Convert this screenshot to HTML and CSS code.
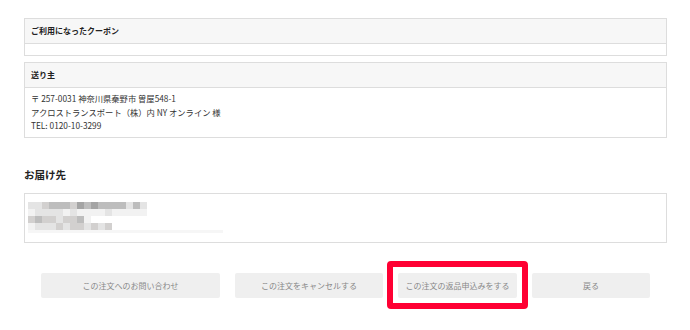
FILE: index.html
```html
<!DOCTYPE html>
<html lang="ja">
<head>
    <meta charset="UTF-8">
    <meta name="viewport" content="width=device-width, initial-scale=1.0">
    <title>注文詳細</title>
    <link rel="stylesheet" href="styles.css">
</head>
<body>

<div class="page">

    <div class="card">
        <div class="card-head">ご利用になったクーポン</div>
        <div class="card-body empty"></div>
    </div>

    <div class="card">
        <div class="card-head">送り主</div>
        <div class="card-body">
            <p>〒 257-0031 神奈川県秦野市 曽屋548-1</p>
            <p>アクロストランスポート（株）内 NY オンライン 様</p>
            <p>TEL: 0120-10-3299</p>
        </div>
    </div>

    <h2 class="title">お届け先</h2>

    <div class="card delivery">
        <!-- address is masked -->
        <div class="mask">
            <div class="row"><span class="s4"></span><span class="s4"></span><span class="s3"></span><span class="s2"></span><span class="s2"></span><span class="s2"></span><span class="s3"></span><span class="s1"></span><span class="s2"></span><span class="s1"></span><span class="s2"></span><span class="s2"></span><span class="s2"></span><span class="s2"></span><span class="s4"></span><span class="s2"></span><span class="s4"></span></div>
            <div class="row"><span class="s5"></span><span class="s4"></span><span class="s4"></span><span class="s4"></span><span class="s4"></span><span class="s5"></span><span class="s4"></span><span class="s5"></span><span class="s5"></span><span class="s5"></span><span class="s5"></span><span class="s4"></span><span class="s5"></span><span class="s5"></span><span class="s5"></span><span class="s5"></span><span class="s5"></span></div>
            <div class="row"><span class="s3"></span><span class="s2"></span><span class="s3"></span><span class="s3"></span><span class="s4"></span><span class="s3"></span><span class="s3"></span><span class="s2"></span><span class="s5"></span></div>
            <div class="row"><span class="s5"></span><span class="s4"></span><span class="s4"></span><span class="s4"></span><span class="s3"></span><span class="s4"></span><span class="s3"></span><span class="s3"></span><span class="s4"></span><span class="s3"></span><span class="s4"></span><span class="s3"></span></div>
            <div class="row thin"></div>
        </div>
    </div>

    <div class="actions">
        <button class="btn w1" type="button">この注文へのお問い合わせ</button>
        <button class="btn w2" type="button">この注文をキャンセルする</button>
        <div class="marked">
            <button class="btn w3" type="button">この注文の返品申込みをする</button>
            <span class="frame"></span>
        </div>
        <button class="btn w4" type="button">戻る</button>
    </div>

</div>

</body>
</html>
```

FILE: styles.css
```css
body {
    margin: 0;
    min-height: 330px;
    background-color: #fff;
    font-family: "Noto Sans CJK JP", "Liberation Sans", sans-serif;
    color: #333;
}

.page {
    width: 643px;
    padding: 18px 0 31px 24px;
}

.card {
    border: 1px solid #ddd;
    margin-bottom: 6px;
}

.card-head {
    height: 24px;
    line-height: 24px;
    padding-left: 6px;
    background-color: #f7f7f7;
    border-bottom: 1px solid #ddd;
    font-size: 8px;
    font-weight: bold;
    color: #222;
}

.card-body {
    padding: 4px 6px;
    font-size: 8.3px;
    color: #333;
}

.card-body p {
    margin: 0;
    line-height: 13.5px;
}

.card-body.empty {
    height: 11px;
    padding: 0;
}

.title {
    margin: 30px 0 11px;
    font-size: 10.5px;
    line-height: 14px;
    font-weight: bold;
    color: #222;
}

.delivery {
    height: 48px;
    padding: 0;
}

.mask {
    padding: 8px 0 0 3px;
}

.mask .row {
    display: flex;
    height: 7px;
}

.mask .row span {
    width: 7px;
    height: 7px;
}

.mask .row.thin {
    width: 195px;
    height: 3px;
    background-color: #f6f6f6;
}

.s1 { background-color: #a4a4a4; }
.s2 { background-color: #bdbdbd; }
.s3 { background-color: #d2d0cf; }
.s4 { background-color: #e4e4e4; }
.s5 { background-color: #f2f2f2; }

.actions {
    display: flex;
    gap: 15px;
    margin-top: 30px;
    padding-left: 17px;
}

.btn {
    height: 25px;
    padding: 0;
    border: none;
    border-radius: 2px;
    background-color: #efefef;
    color: #888;
    font-family: "Noto Sans CJK JP", sans-serif;
    font-size: 8px;
    cursor: pointer;
}

.w1 { width: 179px; }
.w2 { width: 148px; }
.w3 { width: 119px; }
.w4 { width: 118px; }

.marked {
    position: relative;
    display: flex;
}

.frame {
    position: absolute;
    top: -12px;
    left: -11px;
    right: -11px;
    bottom: -11px;
    border: 6px solid #ff0033;
    border-radius: 4px;
}
```
